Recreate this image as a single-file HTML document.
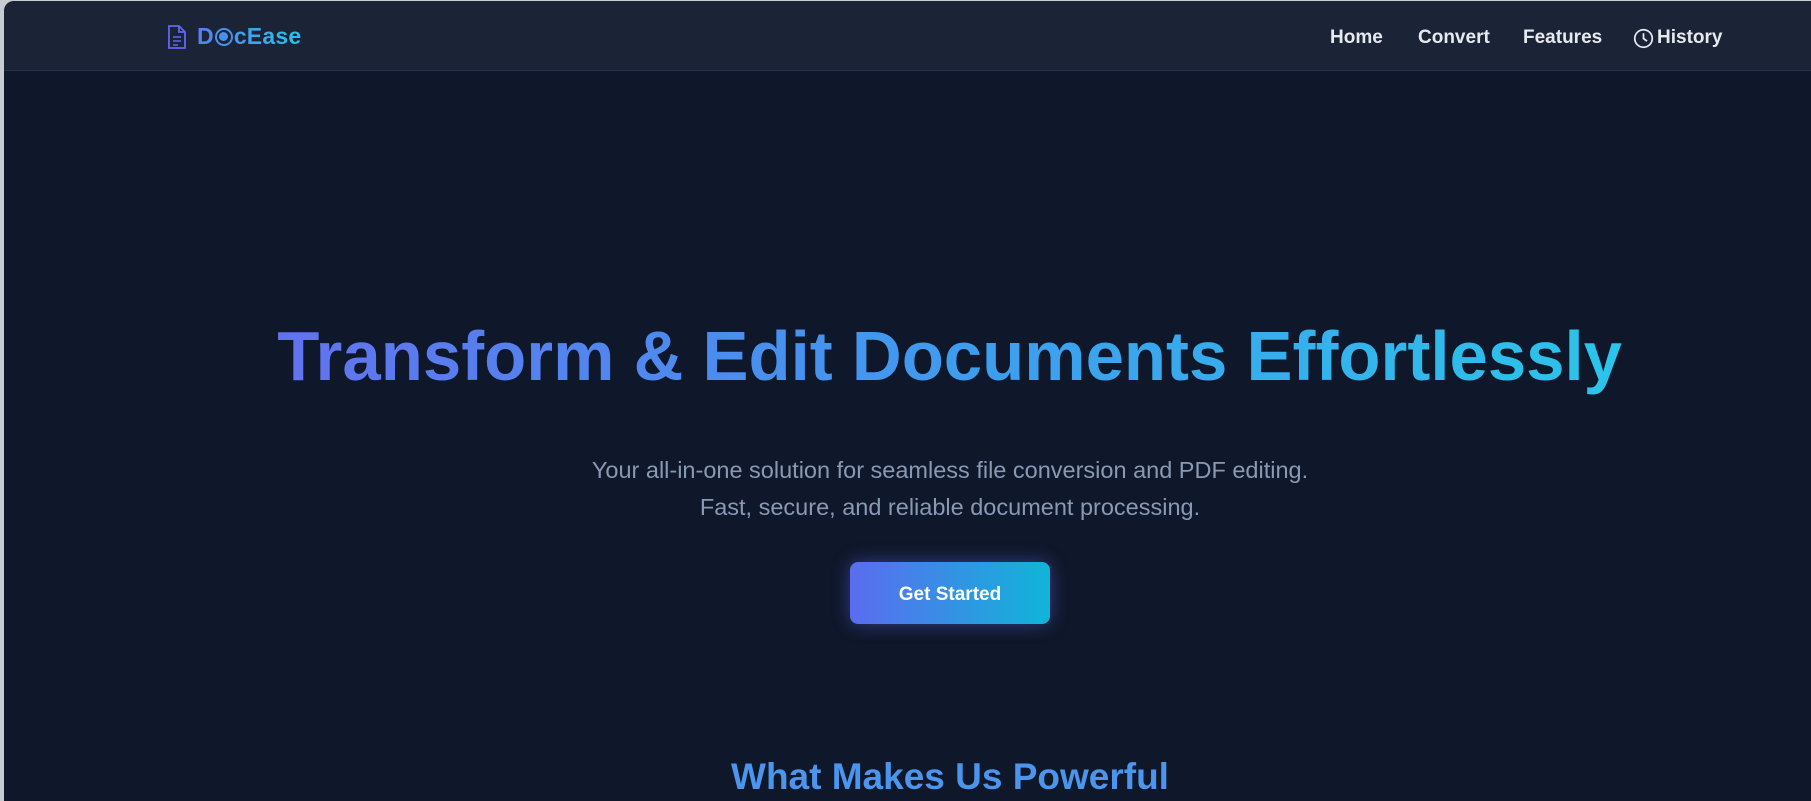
<!DOCTYPE html>
<html><head><meta charset="utf-8"><style>
*{margin:0;padding:0;box-sizing:border-box}
html,body{width:1811px;height:801px;overflow:hidden;background:#c8ccd2}
.page{position:absolute;left:4px;top:1px;width:1807px;height:800px;background:#0f172a;border-top-left-radius:10px;overflow:hidden;font-family:"Liberation Sans",sans-serif}
.hdr{position:absolute;left:0;top:0;width:100%;height:70px;background:#1a2436;border-bottom:1px solid #243156}
.logo{position:absolute;left:163px;top:22px;display:flex;align-items:center}
.logo .t{font-weight:bold;font-size:23px;background:linear-gradient(90deg,#5b7ef0,#28c2e8);-webkit-background-clip:text;color:transparent;margin-left:10px;letter-spacing:0.2px}
.nav{position:absolute;top:26px;font-size:19px;font-weight:bold;color:#e6e9ef}
.c{position:absolute;left:0;width:1892px;text-align:center;white-space:nowrap}
h1{top:310px;font-size:70px;font-weight:bold;line-height:90px}
h1 span{display:inline-block;background:linear-gradient(90deg,#6272ee,#3f9bee 50%,#2bc5ea);-webkit-background-clip:text;color:transparent;transform:scaleX(0.985);transform-origin:center}
.sub{font-size:23.5px;color:#8a99b3;font-weight:300}
.btn{position:absolute;left:846px;top:561px;width:200px;height:62px;border-radius:8px;background:linear-gradient(90deg,#5b6cf0,#10b5d8);box-shadow:0 0 18px rgba(90,110,240,.45);color:#fff;font-weight:bold;font-size:19px;text-align:center;line-height:62px;padding-top:4px}
h2{top:755px;font-size:37px;font-weight:bold;color:#4b95ec}
</style></head><body><div class="page">
<div class="hdr">
 <div class="logo">
  <svg width="20" height="26" viewBox="0 0 20 26" fill="none" stroke="#6366f1" stroke-width="1.8"><path d="M2 2h10l6 6v16H2z"/><path d="M12 2v6h6"/><path d="M6 13h8M6 17h8M6 21h5" stroke-width="1.4"/></svg>
  <span class="t">D<span style="display:inline-block;width:18px;height:18px;border:2.5px solid #4890ee;border-radius:50%;vertical-align:-2px;position:relative;margin:0 1px"><span style="position:absolute;left:2px;top:2px;width:9px;height:9px;border-radius:50%;background:#4890ee"></span></span>cEase</span>
 </div>
 <div class="nav" style="left:1326px">Home</div>
 <div class="nav" style="left:1414px">Convert</div>
 <div class="nav" style="left:1519px">Features</div>
 <div class="nav" style="left:1629px;display:flex;align-items:center"><svg width="21" height="21" viewBox="0 0 24 24" fill="none" stroke="#e6e9ef" stroke-width="2"><circle cx="12" cy="12" r="10"/><path d="M12 6v6l4 3"/></svg><span style="margin-left:3px">History</span></div>
</div>
<h1 class="c"><span>Transform &amp; Edit Documents Effortlessly</span></h1>
<div class="c sub" style="top:456px">Your all-in-one solution for seamless file conversion and PDF editing.</div>
<div class="c sub" style="top:493px">Fast, secure, and reliable document processing.</div>
<div class="btn" style="line-height:58px">Get Started</div>
<h2 class="c">What Makes Us Powerful</h2>
</div></body></html>
